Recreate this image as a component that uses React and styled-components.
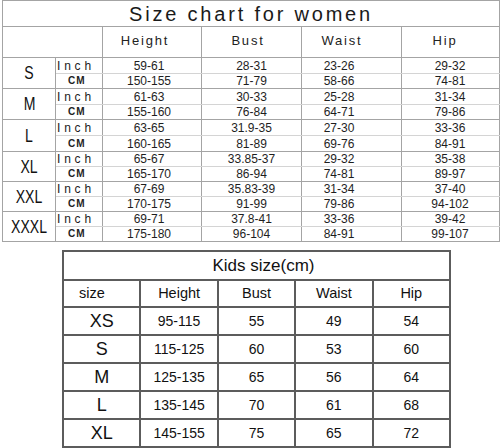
import React from "react";
import styled, { createGlobalStyle } from "styled-components";

const GlobalStyle = createGlobalStyle`
  html, body {
    margin: 0;
    padding: 0;
    background: #fff;
  }
  body {
    font-family: "Liberation Sans", Arial, sans-serif;
    color: #222;
  }
`;

const Page = styled.div`
  width: 500px;
  height: 448px;
  overflow: hidden;
  display: flex;
  flex-direction: column;
  gap: 8px;
`;

/* women chart */

const WomenTable = styled.table`
  margin-left: 2px;
  width: 497px;
  border-collapse: collapse;
  table-layout: fixed;
  line-height: 1;
`;

const WTitle = styled.th`
  height: 24px;
  padding: 1px 0 0 0;
  border: 1px solid #a4a4a4;
  font-size: 20px;
  font-weight: normal;
  letter-spacing: 2.8px;
  color: #1a1a1a;
  text-align: center;
`;

const WHead = styled.th`
  height: 26px;
  padding: 0 ${(p) => p.$shift || 0}px 4px 0;
  border: 1px solid #a4a4a4;
  font-size: 13px;
  font-weight: normal;
  letter-spacing: 1.8px;
  color: #222;
  text-align: center;
`;

const SizeCell = styled.td`
  border: 1px solid #a4a4a4;
  padding: 0;
  text-align: center;
  vertical-align: middle;
  span {
    display: inline-block;
    font-size: 18px;
    color: #111;
    transform: scaleX(0.78);
  }
`;

const UnitCell = styled.td`
  height: ${(p) => p.$h}px;
  padding: 0 0 0 ${(p) => (p.$cm ? 12 : 1)}px;
  border-left: 1px solid #a4a4a4;
  border-right: 1px solid #a4a4a4;
  border-top: 1px solid ${(p) => (p.$cm ? "#d4d4d4" : "#a4a4a4")};
  border-bottom: 1px solid ${(p) => (p.$cm ? "#a4a4a4" : "#d4d4d4")};
  font-size: ${(p) => (p.$cm ? 10 : 12)}px;
  font-weight: ${(p) => (p.$cm ? "bold" : "normal")};
  letter-spacing: ${(p) => (p.$cm ? 1 : 3.8)}px;
  color: #222;
  text-align: left;
`;

const WData = styled.td`
  padding: 0 ${(p) => p.$shift || 0}px 0 0;
  border-left: 1px solid #a4a4a4;
  border-right: 1px solid #a4a4a4;
  border-top: 1px solid ${(p) => (p.$cm ? "#d4d4d4" : "#a4a4a4")};
  border-bottom: 1px solid ${(p) => (p.$cm ? "#a4a4a4" : "#d4d4d4")};
  font-size: 12px;
  color: #1e1e1e;
  text-align: center;
`;

/* kids chart */

const KidsTable = styled.table`
  margin-left: 62px;
  width: 389px;
  border-collapse: collapse;
  table-layout: fixed;
  line-height: 1;
`;

const KTitle = styled.th`
  height: 26px;
  padding: 0 0 1px 14px;
  border: 2px solid #5c5c5c;
  font-size: 17px;
  font-weight: normal;
  color: #111;
  text-align: center;
`;

const KHead = styled.th`
  height: 25px;
  padding: 0 0 0 ${(p) => (p.$left ? 15 : 0)}px;
  border: 2px solid #5c5c5c;
  font-size: 14.5px;
  font-weight: normal;
  color: #111;
  text-align: ${(p) => (p.$left ? "left" : "center")};
`;

const KCell = styled.td`
  height: 26px;
  padding: 0;
  border: 2px solid #5c5c5c;
  font-size: ${(p) => (p.$big ? 18 : 14)}px;
  color: #111;
  text-align: center;
`;

const womenCols = [53, 47, 99, 100, 100, 98];
const dataShift = [6, 0, 25, 1];

const womenRows = [
  { size: "S", h: [15, 14], inch: ["59-61", "28-31", "23-26", "29-32"], cm: ["150-155", "71-79", "58-66", "74-81"] },
  { size: "M", h: [15, 14], inch: ["61-63", "30-33", "25-28", "31-34"], cm: ["155-160", "76-84", "64-71", "79-86"] },
  { size: "L", h: [15, 15], inch: ["63-65", "31.9-35", "27-30", "33-36"], cm: ["160-165", "81-89", "69-76", "84-91"] },
  { size: "XL", h: [14, 14], inch: ["65-67", "33.85-37", "29-32", "35-38"], cm: ["165-170", "86-94", "74-81", "89-97"] },
  { size: "XXL", h: [14, 14], inch: ["67-69", "35.83-39", "31-34", "37-40"], cm: ["170-175", "91-99", "79-86", "94-102"] },
  { size: "XXXL", h: [14, 14], inch: ["69-71", "37.8-41", "33-36", "39-42"], cm: ["175-180", "96-104", "84-91", "99-107"] },
];

const kidsRows = [
  ["XS", "95-115", "55", "49", "54"],
  ["S", "115-125", "60", "53", "60"],
  ["M", "125-135", "65", "56", "64"],
  ["L", "135-145", "70", "61", "68"],
  ["XL", "145-155", "75", "65", "72"],
];

export default function App() {
  return (
    <>
      <GlobalStyle />
      <Page>
        <WomenTable>
          <colgroup>
            {womenCols.map((w, i) => (
              <col key={i} style={{ width: w }} />
            ))}
          </colgroup>
          <thead>
            <tr>
              <WTitle colSpan={6}>Size chart for women</WTitle>
            </tr>
            <tr>
              <WHead colSpan={2} />
              <WHead $shift={14}>Height</WHead>
              <WHead $shift={7}>Bust</WHead>
              <WHead $shift={19}>Waist</WHead>
              <WHead $shift={11}>Hip</WHead>
            </tr>
          </thead>
          <tbody>
            {womenRows.map((r) => (
              <React.Fragment key={r.size}>
                <tr>
                  <SizeCell rowSpan={2}>
                    <span>{r.size}</span>
                  </SizeCell>
                  <UnitCell $h={r.h[0]}>Inch</UnitCell>
                  {r.inch.map((v, i) => (
                    <WData key={i} $shift={dataShift[i]}>
                      {v}
                    </WData>
                  ))}
                </tr>
                <tr>
                  <UnitCell $cm $h={r.h[1]}>CM</UnitCell>
                  {r.cm.map((v, i) => (
                    <WData key={i} $cm $shift={dataShift[i]}>
                      {v}
                    </WData>
                  ))}
                </tr>
              </React.Fragment>
            ))}
          </tbody>
        </WomenTable>

        <KidsTable>
          <thead>
            <tr>
              <KTitle colSpan={5}>Kids size(cm)</KTitle>
            </tr>
            <tr>
              <KHead $left>size</KHead>
              <KHead>Height</KHead>
              <KHead>Bust</KHead>
              <KHead>Waist</KHead>
              <KHead>Hip</KHead>
            </tr>
          </thead>
          <tbody>
            {kidsRows.map((row) => (
              <tr key={row[0]}>
                {row.map((v, i) => (
                  <KCell key={i} $big={i === 0}>
                    {v}
                  </KCell>
                ))}
              </tr>
            ))}
          </tbody>
        </KidsTable>
      </Page>
    </>
  );
}
